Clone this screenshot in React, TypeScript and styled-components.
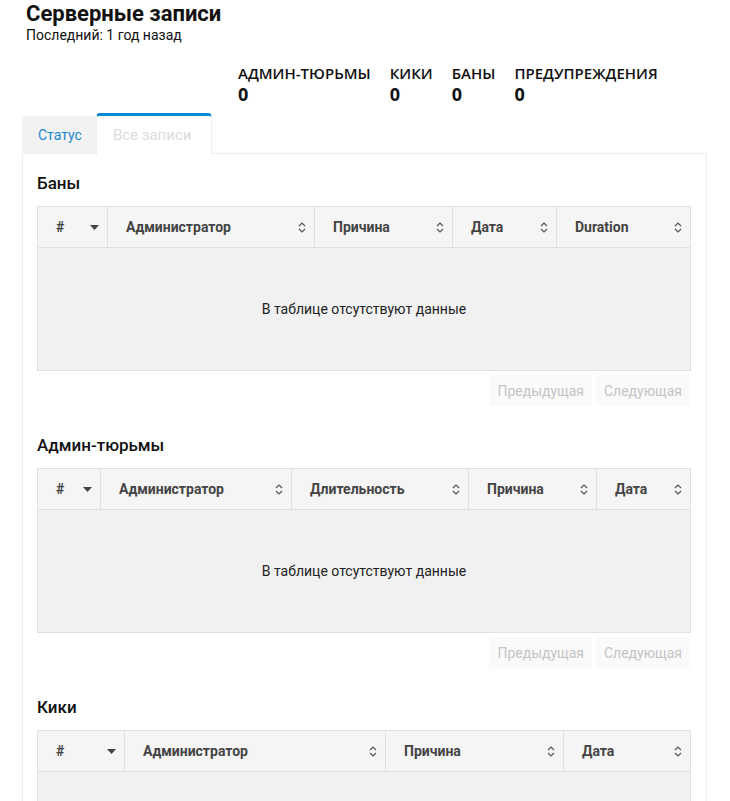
import React from "react";
import styled, { createGlobalStyle } from "styled-components";

const GlobalStyle = createGlobalStyle`
  html, body {
    margin: 0;
    padding: 0;
    background: #fff;
  }
  body {
    font-family: Roboto, "Liberation Sans", sans-serif;
    color: #111;
  }
`;

const Page = styled.div`
  margin: 0 23px 0 22px;
`;

const Header = styled.div`
  padding: 1px 0 0 4px;
`;

const Title = styled.h1`
  margin: 0;
  font-size: 22px;
  font-weight: 700;
  line-height: 26px;
`;

const Subtitle = styled.div`
  font-size: 14px;
  line-height: 16px;
`;

const Stats = styled.div`
  display: flex;
  gap: 19px;
  margin: 21px 0 0 216px;
  font-family: "Open Sans", "Noto Sans", sans-serif;
`;

const Stat = styled.div`
  display: flex;
  flex-direction: column;
`;

const StatLabel = styled.span`
  font-size: 15px;
  font-weight: 600;
  line-height: 19px;
`;

const StatValue = styled.span`
  font-size: 18px;
  font-weight: 700;
  line-height: 22px;
`;

const TabBar = styled.div`
  display: flex;
  align-items: flex-end;
  margin-top: 8px;
  height: 40px;
`;

const Tab = styled.div<{ $active?: boolean }>`
  display: flex;
  align-items: center;
  box-sizing: border-box;
  font-size: ${(p) => (p.$active ? "15px" : "14px")};
  ${(p) =>
    p.$active
      ? `
    height: 41px;
    padding: 0 20px 0 16px;
    color: #dcdcdc;
    background: #fff;
    border: 1px solid #eee;
    border-top: 3px solid #0a8ad6;
    border-bottom: none;
    border-radius: 4px 4px 0 0;
    margin-bottom: -1px;
    position: relative;
    z-index: 1;
  `
      : `
    height: 37px;
    padding: 0 14px 0 16px;
    color: #1a87cf;
    background: #f2f2f2;
    border-radius: 4px 0 0 0;
  `}
`;

const Panel = styled.div`
  border: 1px solid #eee;
  padding: 10px 16px 0 14px;
`;

const Section = styled.section`
  & + & {
    margin-top: 20px;
  }
`;

const SectionTitle = styled.h2`
  margin: 0;
  font-size: 17px;
  font-weight: 500;
  line-height: 38px;
  height: 42px;
`;

const Table = styled.table`
  width: 100%;
  border-collapse: collapse;
  table-layout: fixed;
  border: 1px solid #dde0e5;
`;

const HeadCell = styled.th`
  height: 41px;
  box-sizing: border-box;
  padding: 0 8px 0 18px;
  background: #f5f5f5;
  border: 1px solid #dde0e5;
  text-align: left;
  font-size: 14px;
  font-weight: 700;
  color: #444;
`;

const HeadInner = styled.div`
  display: flex;
  align-items: center;
  justify-content: space-between;
`;

const EmptyCell = styled.td`
  height: 120px;
  background: #f1f1f1;
  text-align: center;
  font-size: 14px;
  color: #222;
`;

const Pager = styled.div`
  display: flex;
  justify-content: flex-end;
  gap: 4px;
  padding: 4px 0 0;
`;

const PageButton = styled.div`
  height: 31px;
  padding: 0 8px;
  display: flex;
  align-items: center;
  background: #fafafa;
  border-radius: 2px;
  color: #c4c4c4;
  font-size: 14px;
`;

function SortIcon() {
  return (
    <svg width="8" height="11" viewBox="0 0 8 11" fill="none">
      <path d="M1 4 L4 1 L7 4" stroke="#555" strokeWidth="1.2" />
      <path d="M1 7 L4 10 L7 7" stroke="#555" strokeWidth="1.2" />
    </svg>
  );
}

function SortedDesc() {
  return (
    <svg width="9" height="5" viewBox="0 0 9 5">
      <path d="M0 0 L9 0 L4.5 5 Z" fill="#444" />
    </svg>
  );
}

interface LogTableProps {
  title: string;
  columns: { name: string; width: number }[];
  pager?: boolean;
}

function LogTable({ title, columns, pager = true }: LogTableProps) {
  return (
    <Section>
      <SectionTitle>{title}</SectionTitle>
      <Table>
        <colgroup>
          {columns.map((c) => (
            <col key={c.name} style={{ width: c.width }} />
          ))}
        </colgroup>
        <thead>
          <tr>
            {columns.map((c, i) => (
              <HeadCell key={c.name}>
                <HeadInner>
                  <span>{c.name}</span>
                  {i === 0 ? <SortedDesc /> : <SortIcon />}
                </HeadInner>
              </HeadCell>
            ))}
          </tr>
        </thead>
        <tbody>
          <tr>
            <EmptyCell colSpan={columns.length}>
              В таблице отсутствуют данные
            </EmptyCell>
          </tr>
        </tbody>
      </Table>
      {pager && (
        <Pager>
          <PageButton>Предыдущая</PageButton>
          <PageButton>Следующая</PageButton>
        </Pager>
      )}
    </Section>
  );
}

const stats = [
  { label: "АДМИН-ТЮРЬМЫ", value: 0 },
  { label: "КИКИ", value: 0 },
  { label: "БАНЫ", value: 0 },
  { label: "ПРЕДУПРЕЖДЕНИЯ", value: 0 },
];

export default function App() {
  return (
    <Page>
      <GlobalStyle />
      <Header>
        <Title>Серверные записи</Title>
        <Subtitle>Последний: 1 год назад</Subtitle>
      </Header>
      <Stats>
        {stats.map((s) => (
          <Stat key={s.label}>
            <StatLabel>{s.label}</StatLabel>
            <StatValue>{s.value}</StatValue>
          </Stat>
        ))}
      </Stats>
      <TabBar>
        <Tab>Статус</Tab>
        <Tab $active>Все записи</Tab>
      </TabBar>
      <Panel>
        <LogTable
          title="Баны"
          columns={[
            { name: "#", width: 70 },
            { name: "Администратор", width: 207 },
            { name: "Причина", width: 138 },
            { name: "Дата", width: 104 },
            { name: "Duration", width: 134 },
          ]}
        />
        <LogTable
          title="Админ-тюрьмы"
          columns={[
            { name: "#", width: 63 },
            { name: "Администратор", width: 191 },
            { name: "Длительность", width: 177 },
            { name: "Причина", width: 128 },
            { name: "Дата", width: 94 },
          ]}
        />
        <LogTable
          title="Кики"
          columns={[
            { name: "#", width: 87 },
            { name: "Администратор", width: 261 },
            { name: "Причина", width: 178 },
            { name: "Дата", width: 127 },
          ]}
        />
      </Panel>
    </Page>
  );
}
